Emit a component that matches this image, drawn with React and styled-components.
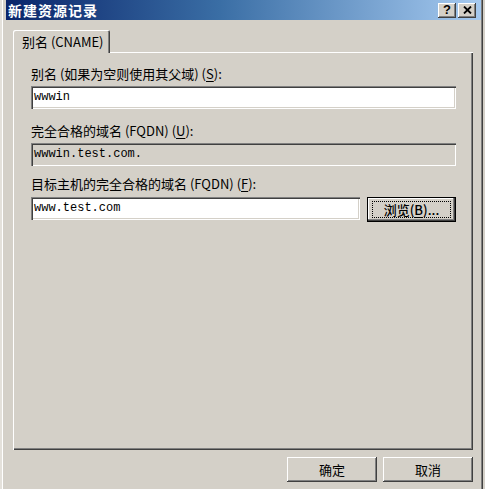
import React from 'react';
import styled, { createGlobalStyle } from 'styled-components';

const FACE = '#d4d0c8';
const SHADOW = '#808080';
const DARK = '#404040';

const Global = createGlobalStyle`
  html, body { margin: 0; padding: 0; background: ${FACE}; }
  body {
    width: 485px; height: 489px; overflow: hidden;
    font-family: "Noto Sans CJK SC", "Liberation Sans", sans-serif;
    color: #000;
  }
  * { box-sizing: border-box; }
`;

const Window = styled.div`
  width: 483px;
  height: 489px;
  background: ${FACE};
  padding: 0 2px 0 6px;
  box-shadow: inset 2px 0 #e4e1db, inset 3px 0 #fff, inset -1px 0 ${DARK}, inset -2px 0 ${SHADOW};
  display: flex;
  flex-direction: column;
`;

const TitleBar = styled.div`
  height: 20px;
  display: flex;
  align-items: center;
  padding: 0 5px 0 2px;
  background: linear-gradient(90deg, #0a246a 0%, #3a6ea5 45%, #a6caf0 100%);
`;

const TitleText = styled.div`
  flex: 1;
  color: #fff;
  font-weight: 700;
  font-size: 14px;
  letter-spacing: 1px;
  line-height: 20px;
`;

const CaptionButtons = styled.div`
  display: flex;
  gap: 2px;
`;

const CaptionButton = styled.div`
  width: 18px;
  height: 15px;
  background: ${FACE};
  box-shadow: inset -1px -1px ${DARK}, inset 1px 1px #fff, inset -2px -2px ${SHADOW};
  display: flex;
  align-items: center;
  justify-content: center;
  font-family: "Liberation Sans", sans-serif;
  font-weight: 700;
  font-size: 13px;
  line-height: 1;
  padding-bottom: 1px;
`;

const Body = styled.div`
  padding: 10px 8px 0 7px;
  display: flex;
  flex-direction: column;
`;

const TabStrip = styled.div`
  display: flex;
  height: 23px;
  position: relative;
  z-index: 1;
  margin-bottom: -1px;
`;

const Tab = styled.div`
  width: 97px;
  height: 23px;
  background: ${FACE};
  border-top-left-radius: 2px;
  border-top-right-radius: 2px;
  box-shadow: inset 1px 1px #fff, inset -1px 0 ${DARK}, inset -2px 0 ${SHADOW};
  padding-left: 9px;
  font-size: 13px;
  line-height: 24px;
  white-space: nowrap;
`;

const Panel = styled.div`
  height: 398px;
  background: ${FACE};
  box-shadow: inset 1px 1px #fff, inset -1px -1px ${DARK}, inset -2px -2px ${SHADOW};
  padding: 13px 17px 0 18px;
  display: flex;
  flex-direction: column;
`;

const Label = styled.div`
  font-size: 13px;
  line-height: 18px;
  height: 18px;
  white-space: nowrap;
  margin-top: ${(p) => p.$mt || 0}px;
`;

const Key = styled.span`
  text-decoration: underline;
  text-underline-offset: 2px;
`;

const Row = styled.div`
  display: flex;
  gap: 7px;
  margin-top: ${(p) => p.$mt || 3}px;
`;

const TextBox = styled.div`
  flex: ${(p) => (p.$width ? `0 0 ${p.$width}px` : '1')};
  height: 23px;
  background: ${(p) => (p.$readonly ? FACE : '#fff')};
  box-shadow: inset 1px 1px ${SHADOW}, inset 2px 2px ${DARK}, inset -1px -1px #fff, inset -2px -2px ${FACE};
  padding: 0 3px;
  font-family: "Liberation Mono", monospace;
  font-size: 12px;
  line-height: 23px;
  white-space: nowrap;
`;

const PushButton = styled.div`
  width: 90px;
  height: 25px;
  background: ${FACE};
  display: flex;
  align-items: center;
  justify-content: center;
  font-size: 13px;
  padding: ${(p) => (p.$default ? '4px 5px' : '0')};
  box-shadow: ${(p) =>
    p.$default
      ? `inset 0 0 0 1px #000, inset -2px -2px ${DARK}, inset -3px -3px ${SHADOW}, inset 2px 2px #fff`
      : `inset -1px -1px ${DARK}, inset 1px 1px #fff, inset -2px -2px ${SHADOW}`};
`;

const FocusRing = styled.span`
  flex: 1;
  align-self: stretch;
  border: 1px dotted #000;
  display: flex;
  align-items: center;
  justify-content: center;
  white-space: nowrap;
  font-weight: 500;
`;

const Footer = styled.div`
  display: flex;
  justify-content: flex-end;
  gap: 6px;
  padding-top: 7px;
`;

const CloseIcon = () => (
  <svg width="9" height="8" viewBox="0 0 9 8">
    <path d="M1 0.5 L8 7.5 M8 0.5 L1 7.5" stroke="#000" strokeWidth="1.8" />
  </svg>
);

export default function App() {
  return (
    <>
      <Global />
      <Window>
        <TitleBar>
          <TitleText>新建资源记录</TitleText>
          <CaptionButtons>
            <CaptionButton>?</CaptionButton>
            <CaptionButton>
              <CloseIcon />
            </CaptionButton>
          </CaptionButtons>
        </TitleBar>
        <Body>
          <TabStrip>
            <Tab>别名 (CNAME)</Tab>
          </TabStrip>
          <Panel>
            <Label>
              别名 (如果为空则使用其父域) (<Key>S</Key>):
            </Label>
            <Row>
              <TextBox>wwwin</TextBox>
            </Row>
            <Label $mt={13}>
              完全合格的域名 (FQDN) (<Key>U</Key>):
            </Label>
            <Row>
              <TextBox $readonly>wwwin.test.com.</TextBox>
            </Row>
            <Label $mt={9}>
              目标主机的完全合格的域名 (FQDN) (<Key>F</Key>):
            </Label>
            <Row $mt={4}>
              <TextBox $width={329}>www.test.com</TextBox>
              <PushButton $default>
                <FocusRing>
                  浏览(<Key>B</Key>)...
                </FocusRing>
              </PushButton>
            </Row>
          </Panel>
          <Footer>
            <PushButton>确定</PushButton>
            <PushButton>取消</PushButton>
          </Footer>
        </Body>
      </Window>
    </>
  );
}
